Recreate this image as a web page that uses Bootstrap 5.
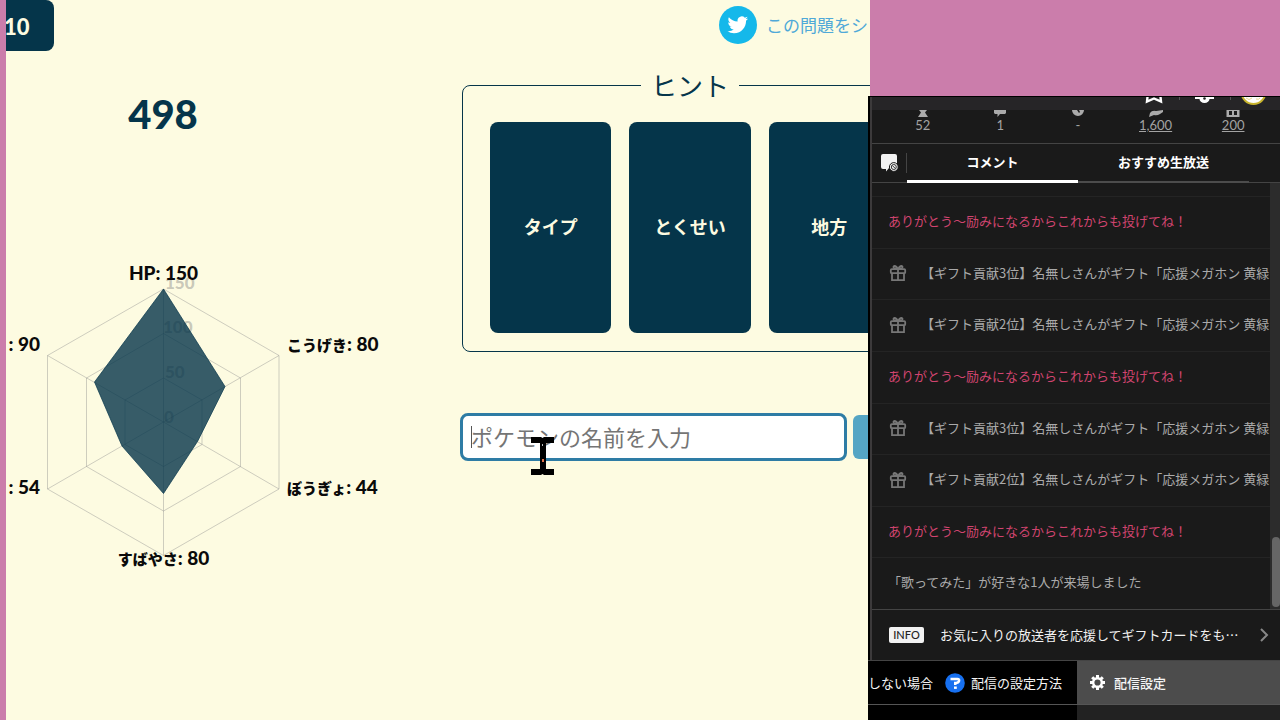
<!DOCTYPE html>
<html lang="ja">
<head>
<meta charset="utf-8">
<meta name="viewport" content="width=device-width, initial-scale=1">
<title>種族値クイズ</title>
<link href="https://cdn.jsdelivr.net/npm/bootstrap@5.3.0/dist/css/bootstrap.min.css" rel="stylesheet">
<style>
:root{--navy:#05354a;--cream:#fdfbe1;--line:#444}
body{background:#cb7dab;font-family:"Noto Sans CJK JP",sans-serif;color:var(--navy);line-height:1.5}
.quiz{background:var(--cream);margin-left:6px;min-width:0}
.stats-col{flex:0 0 454px}
.hint-col{flex:0 0 460px}
.round-tag{background:var(--navy);color:var(--cream);width:48px;height:51px;border-radius:0 8px 8px 0;font:900 22px/53px Lato,sans-serif;margin:0;text-indent:-2px}
.total{font:900 40px/48px Lato,sans-serif;width:314px;padding-top:39px;margin:0 0 112px}
.radar text{font-family:Lato,"Noto Sans CJK JP",sans-serif;font-weight:900;font-size:19px;fill:#0a0a0a}
.radar .kana{font-size:15px}
.radar .tick text{fill:#777;fill-opacity:.4;font-size:17px}
.share{height:48px;padding:2px 0 0 259px;margin-bottom:2px;color:#4fa9d8;font-size:17px;gap:9px;text-decoration:none}
.share:hover{color:#2c8fc4}
.hints{border:1px solid var(--navy);border-radius:8px;margin:19px 0 61px 2px;padding:19px 29px 18px 27px}
.hints legend{font-size:26px;line-height:36px;padding:0 10px;margin:0 auto}
.hint-card{background:var(--navy);color:var(--cream);border:0;border-radius:8px;height:211px;font-weight:700;font-size:18px;padding:0 0 2px;flex:1 1 0}
.answer{height:48px;border:3px solid #2e7ca5;border-radius:8px;font-size:22px;padding:0 8px 3px;width:387px;flex:none}
.answer::placeholder{color:#757575;opacity:1}
.send{background:#55a5c4;width:66px;height:44px;border-radius:6px}
.caret{left:11px;top:13px;width:1px;height:22px;background:#555}
.ibeam{left:71px;top:24px}
.side{flex:0 0 410px;padding-top:96px;font-size:13px}
.live{background:#1a1a1a;border-top:1px solid #000;margin-left:-2px;color:#aaa;min-height:0}
.edge{border-left:2px solid #3c3a3b;box-shadow:-2px 0 #000;margin-left:2px;min-height:0}
.strip{background:#262527;height:13px}
.counts{height:34px;padding:0 8px 0 12px;border-bottom:1px solid var(--line);line-height:16px}
.counts li{font-family:Lato,sans-serif;flex:1 1 0;color:#a3a3a3}
.counts svg{display:block;margin:0 auto}
.counts a{color:inherit}
.tabs{height:39px;padding-left:9px;border-bottom:1px solid var(--line)}
.tabs button{width:171px;height:39px;border:0;border-bottom:2px solid #4c4c4c;background:none;color:#fff;font-weight:700;padding:0 0 1px}
.tabs button.active{border-bottom:3px solid #fff;padding:0}
.tabs .rule{width:1px;height:20px;background:#444;margin:0 0 0 7px}
.feed{padding-top:13px;margin-right:10px;min-width:0}
.feed li{border-top:1px solid #242424;padding:0 0 3px 16px;min-height:32px;flex:1 1 0;white-space:nowrap;overflow:hidden}
.feed svg{margin:2px 14px 0 1px}
.feed .thanks{color:#d0446f}
.track{background:#2c2c2c;width:10px}
.thumb{background:#666;width:8px;height:70px;border-radius:4px;margin-bottom:2px}
.info{height:51px;border-top:1px solid var(--line);padding:0 11px 0 17px;color:#f2f2f2;text-decoration:none}
.info-tag{background:#f2f2f2;color:#222;font:500 11px/16px Lato,sans-serif;width:35px;border-radius:2px}
.bar{height:60px}
.bar a,.bar button{height:45px;border:0;border-top:1px solid #444;border-bottom:1px solid #555;color:#f5f5f5;text-decoration:none}
.bar .help{background:#000;width:209px}
.bar .help svg{margin:0 6px 0 12px}
.bar button{background:#4c4c4c;font-weight:500;padding:0 0 0 12px}
.under{background:#000}
.under span{width:209px}
.under div{background:#222}
</style>
</head>
<body class="vh-100 overflow-hidden d-flex">
<main class="quiz flex-grow-1 d-flex overflow-hidden">
  <section class="stats-col">
    <p class="round-tag">10</p>
    <h1 class="total text-center">498</h1>
    <svg class="radar d-block" width="434" height="320" viewBox="6 250 434 320" role="img" aria-label="種族値">
      <g fill="none" stroke="#8d8d8d" stroke-opacity=".42">
        <path d="M163.500 289L279 355.500V489L163.500 555.500L47.500 489V355.500Z M163.500 333.500L240.500 378V466.500L163.500 511L86.500 466.500V378Z M163.500 378L202 400V444.500L163.500 466.500L125 444.500V400Z"/>
        <path d="M163.500 422V289M163.500 422L279 355.500M163.500 422L279 489M163.500 422V555.500M163.500 422L47.500 489M163.500 422L47.500 355.500"/>
      </g>
      <g class="tick"><text x="165" y="289">150</text><text x="163" y="333">100</text><text x="165" y="378">50</text><text x="164" y="423">0</text></g>
      <path d="M163.500 289L225 386.500L197.500 441.500L163.500 493.500L122 446L94.500 382Z" fill="#05354a" fill-opacity=".8" stroke="#05354a" stroke-opacity=".7"/>
      <g text-anchor="middle"><text x="163.500" y="280">HP: 150</text><text x="163.500" y="565"><tspan class="kana">すばやさ</tspan>: 80</text></g>
      <text x="287" y="351"><tspan class="kana">こうげき</tspan>: 80</text>
      <text x="287" y="494"><tspan class="kana">ぼうぎょ</tspan>: 44</text>
      <g text-anchor="end"><text x="40" y="351">: 90</text><text x="40" y="494">: 54</text></g>
    </svg>
  </section>
  <section class="hint-col">
    <a href="#" class="share d-flex align-items-center text-nowrap">
      <svg class="flex-shrink-0" width="38" height="38" viewBox="0 0 38 38" aria-hidden="true"><circle cx="19" cy="19" r="19" fill="#15b8ea"/><path transform="translate(8.500 8.500) scale(.86)" fill="#fff" d="M23.950 4.570a10 10 0 0 1-2.820.770 4.960 4.960 0 0 0 2.160-2.720 9.900 9.900 0 0 1-3.130 1.180 4.920 4.920 0 0 0-8.380 4.480C7.690 8.090 4.070 6.130 1.640 3.160a4.820 4.820 0 0 0-.670 2.480c0 1.710.870 3.210 2.190 4.100a4.900 4.900 0 0 1-2.230-.620v.060a4.920 4.920 0 0 0 3.950 4.830 5 5 0 0 1-2.210.080 4.940 4.940 0 0 0 4.600 3.420A9.870 9.870 0 0 1 0 19.540a13.990 13.990 0 0 0 7.550 2.210c9.050 0 14-7.500 14-13.980 0-.210 0-.420-.020-.630a9.940 9.940 0 0 0 2.460-2.550z"/></svg>
      <span>この問題をシ</span>
    </a>
    <fieldset class="hints">
      <legend class="float-none w-auto">ヒント</legend>
      <div class="d-flex" style="gap:18px">
        <button type="button" class="hint-card">タイプ</button>
        <button type="button" class="hint-card">とくせい</button>
        <button type="button" class="hint-card">地方</button>
      </div>
    </fieldset>
    <form class="d-flex align-items-center position-relative" style="gap:6px">
      <input type="text" class="form-control answer" placeholder="ポケモンの名前を入力" aria-label="ポケモンの名前">
      <button type="button" class="btn send" aria-label="回答"></button>
      <span class="caret position-absolute"></span>
      <svg class="ibeam position-absolute" width="23" height="38" viewBox="0 0 23 38" aria-hidden="true"><path d="M0 0H10L11.500 1L13 0H23V6H15V32H23V38H13L11.500 37L10 38H0V32H9V6H0Z"/><path d="M11 22h2v3h-2z" fill="#e0724a"/><path d="M11 7h1v2h-1z" fill="#bbb"/></svg>
    </form>
  </section>
</main>

<aside class="side d-flex flex-column">
  <div class="live flex-grow-1 d-flex flex-column position-relative">
    <div class="edge flex-grow-1 d-flex flex-column">
      <div class="strip overflow-hidden">
        <svg class="d-block ms-auto" width="140" height="13" viewBox="1140 97 140 13" aria-hidden="true"><path d="M1148 92L1147 101.500L1154 98.500L1161 101.500L1160 92" fill="none" stroke="#fff" stroke-width="2.400"/><path d="M1179.500 97v3M1230.500 97v3" stroke="#555"/><path d="M1195 96H1214V99H1209.500A5 4 0 0 1 1199.500 99H1195Z" fill="#fff"/><circle cx="1204.500" cy="98.500" r="1.300" fill="#262527"/><circle cx="1253.500" cy="92" r="12" fill="#fff" stroke="#c9b52e" stroke-width="2"/><path d="M1246 98q3 3 6 0M1256 99q3 1 4-1" stroke="#ead98b" fill="none"/></svg>
      </div>
      <ul class="counts list-unstyled d-flex text-center mb-0">
        <li><svg width="14" height="7" viewBox="0 0 14 7"><path d="M3 0H11L9 2.500L12 7H2L5 2.500Z" fill="#aaa"/></svg>52</li>
        <li><svg width="14" height="7" viewBox="0 0 14 7"><path d="M1 0H13V3L12 4H7L4.500 7V4H2L1 3Z" fill="#aaa"/></svg>1</li>
        <li><svg width="14" height="7" viewBox="0 0 14 7"><path d="M1 0H6L8 3L9 2L8 0H13A6 6 0 0 1 1 0Z" fill="#aaa"/></svg>-</li>
        <li><svg width="16" height="7" viewBox="0 0 16 7"><path d="M1 7L2 3Q4 0 8 1L15 0V2L12 4Q9 6 6 5Z" fill="#aaa"/></svg><a href="#">1,600</a></li>
        <li><svg width="14" height="7" viewBox="0 0 14 7"><path d="M.500 0H13.500V7H.500Z" fill="#aaa"/><path d="M3 1h3v4H3zM8 1h3v4H8z" fill="#1a1a1a"/></svg><a href="#">200</a></li>
      </ul>
      <div class="tabs d-flex align-items-center">
        <svg width="18" height="20" viewBox="0 0 18 20" aria-hidden="true"><path d="M2 1H14Q16 1 16 3V15H8L5 18.500V16H2Q0 16 0 14V3Q0 1 2 1Z" fill="#f2f2f2"/><circle cx="12.800" cy="14" r="4.400" fill="#f2f2f2" stroke="#1a1a1a" stroke-width="1"/><circle cx="12.800" cy="14" r="2.500" fill="none" stroke="#333" stroke-width="1"/><path d="M11.300 12.500L14.300 15.500" stroke="#333"/></svg>
        <span class="rule"></span>
        <button type="button" class="active">コメント</button>
        <button type="button">おすすめ生放送</button>
      </div>
      <div class="flex-grow-1 d-flex position-relative overflow-hidden">
        <ul class="feed list-unstyled flex-grow-1 d-flex flex-column mb-0" id="feed"></ul>
        <div class="track position-absolute top-0 end-0 bottom-0 d-flex align-items-end justify-content-end"><div class="thumb"></div></div>
      </div>
      <a href="#" class="info d-flex align-items-center">
        <span class="info-tag text-center me-3">INFO</span><span class="text-nowrap">お気に入りの放送者を応援してギフトカードをも…</span>
        <svg class="ms-auto flex-shrink-0" width="10" height="14" viewBox="0 0 10 14" aria-hidden="true"><path d="M2 1L8 7L2 13" fill="none" stroke="#888" stroke-width="2"/></svg>
      </a>
    </div>
    <div class="bar d-flex flex-column flex-shrink-0">
      <div class="d-flex">
        <a href="#" class="help d-flex align-items-center text-nowrap overflow-hidden flex-shrink-0"><span>しない場合</span>
          <svg class="flex-shrink-0" width="20" height="20" viewBox="0 0 20 20" aria-hidden="true"><circle cx="10" cy="10" r="9.800" fill="#1770f0"/><path d="M5.500 6H12.500Q14.500 6 14 8Q13.500 10 10.300 10V12" fill="none" stroke="#fff" stroke-width="2.600"/><path d="M9 13.500h2.800v2.400H9z" fill="#fff"/></svg>
          <span>配信の設定方法</span></a>
        <button type="button" class="flex-grow-1 d-flex align-items-center gap-2">
          <svg width="17" height="17" viewBox="0 0 17 17" aria-hidden="true"><g stroke="#fff" stroke-width="3"><path d="M8.500 1V4M8.500 13V16M1 8.500H4M13 8.500H16M3.200 3.200L5.300 5.300M11.700 11.700L13.800 13.800M3.200 13.800L5.300 11.700M11.700 5.300L13.800 3.200"/></g><circle cx="8.500" cy="8.500" r="4.300" fill="none" stroke="#fff" stroke-width="2.400"/></svg>
          配信設定</button>
      </div>
      <div class="under flex-grow-1 d-flex"><span></span><div class="flex-grow-1"></div></div>
    </div>
  </div>
</aside>
<script src="https://cdn.jsdelivr.net/npm/bootstrap@5.3.0/dist/js/bootstrap.bundle.min.js"></script>
<script>
const gift = '<svg class="flex-shrink-0" width="18" height="18" viewBox="0 0 18 18"><g fill="none" stroke="#777" stroke-width="1.800"><rect x="1.800" y="5.200" width="14.400" height="4" rx="1"/><path d="M3 9.200V16.200H15V9.200M9 5V16M9 5Q4 5 4.500 2.700Q6 .500 9 5Q12 .500 13.500 2.700Q14 5 9 5"/></g></svg>';
const thanks = { kind: 'thanks', text: 'ありがとう～励みになるからこれからも投げてね！' };
const rank = n => ({ kind: 'gift', text: `【ギフト貢献${n}位】名無しさんがギフト「応援メガホン 黄緑` });
const rows = [thanks, rank(3), rank(2), thanks, rank(3), rank(2), thanks,
  { kind: 'visit', text: '「歌ってみた」が好きな1人が来場しました' }];
document.getElementById('feed').innerHTML = rows.map(r =>
  `<li class="d-flex align-items-center ${r.kind}">${r.kind === 'gift' ? gift : ''}<span>${r.text}</span></li>`).join('');
</script>
</body>
</html>
